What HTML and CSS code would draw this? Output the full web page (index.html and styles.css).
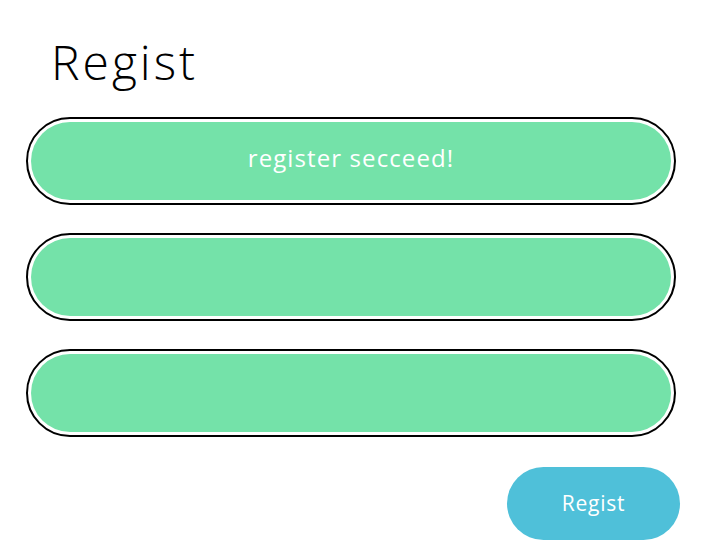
FILE: index.html
```html
<!DOCTYPE html>
<html>
<head>
<meta charset="utf-8">
<link rel="stylesheet" href="styles.css">
</head>
<body>
<div class="page">
  <h1 class="title">Regist</h1>
  <div class="fields">
    <div class="field"><div class="field-inner">register secceed!</div></div>
    <div class="field"><div class="field-inner"></div></div>
    <div class="field"><div class="field-inner"></div></div>
  </div>
  <div class="actions">
    <button class="btn">Regist</button>
  </div>
</div>
</body>
</html>
```
FILE: styles.css
```css
html, body {
  margin: 0;
  padding: 0;
  background: #ffffff;
}
.page {
  font-family: "Open Sans", Lato, sans-serif;
  padding: 26px 21px 0 26px;
  display: flex;
  flex-direction: column;
}
.title {
  margin: 0 0 20px 25px;
  font-size: 48px;
  font-weight: 300;
  line-height: 71px;
  color: #000;
  letter-spacing: 3px;
}
.fields {
  display: flex;
  flex-direction: column;
  gap: 28px;
}
.field {
  box-sizing: border-box;
  width: 650px;
  height: 88px;
  border: 2px solid #000;
  border-radius: 44px;
  padding: 3px;
  background: #fff;
}
.field-inner {
  height: 100%;
  border-radius: 40px;
  background: #74e2a9;
  color: #fff;
  font-size: 24px;
  font-weight: 400;
  letter-spacing: 1.1px;
  display: flex;
  align-items: center;
  justify-content: center;
  padding-bottom: 8px;
  box-sizing: border-box;
}
.actions {
  display: flex;
  justify-content: flex-end;
  margin-top: 30px;
}
.btn {
  width: 173px;
  height: 73px;
  border: none;
  border-radius: 37px;
  background: #4fc0d9;
  color: #fff;
  font-family: "Open Sans", Lato, sans-serif;
  font-size: 21px;
  font-weight: 400;
  letter-spacing: 0.8px;
  padding: 0 0 1px 0;
  margin-right: 0;
}
```
